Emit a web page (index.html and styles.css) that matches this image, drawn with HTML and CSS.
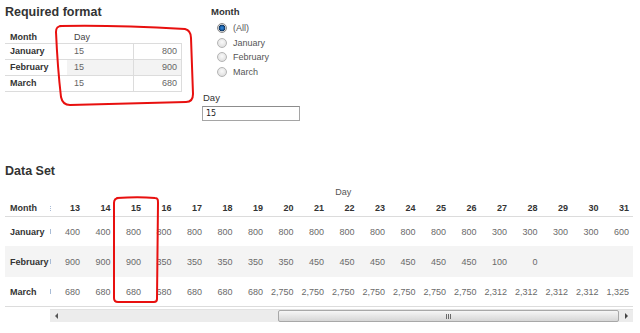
FILE: index.html
```html
<!DOCTYPE html>
<html>
<head>
<meta charset="utf-8">
<link rel="stylesheet" href="styles.css">
</head>
<body>
<div class="page">
  <div class="top">
    <section class="req">
      <h2 class="title">Required format</h2>
      <div class="rtable">
        <div class="rrow rhead"><span class="c-m">Month</span><span class="c-d">Day</span><span class="c-v"></span></div>
        <div class="rrow"><span class="c-m">January</span><span class="c-d">15</span><span class="c-v">800</span></div>
        <div class="rrow alt"><span class="c-m">February</span><span class="c-d">15</span><span class="c-v">900</span></div>
        <div class="rrow"><span class="c-m">March</span><span class="c-d">15</span><span class="c-v">680</span></div>
      </div>
    </section>
    <aside class="filters">
      <div class="flabel">Month</div>
      <ul class="radios">
        <li><span class="radio on"></span><span>(All)</span></li>
        <li><span class="radio"></span><span>January</span></li>
        <li><span class="radio"></span><span>February</span></li>
        <li><span class="radio"></span><span>March</span></li>
      </ul>
      <div class="dlabel">Day</div>
      <div class="dinput">15</div>
    </aside>
  </div>

  <h2 class="title ds">Data Set</h2>
  <div class="dtable">
    <div class="super">Day</div>
    <div class="drow dhead">
      <span class="mcell">Month<i class="tick dots"></i></span>
      <span>13</span><span>14</span><span>15</span><span>16</span><span>17</span><span>18</span><span>19</span><span>20</span><span>21</span><span>22</span><span>23</span><span>24</span><span>25</span><span>26</span><span>27</span><span>28</span><span>29</span><span>30</span><span>31</span>
    </div>
    <div class="drow r1">
      <span class="mcell">January<i class="tick"></i></span>
      <span>400</span><span>400</span><span>800</span><span>800</span><span>800</span><span>800</span><span>800</span><span>800</span><span>800</span><span>800</span><span>800</span><span>800</span><span>800</span><span>800</span><span>300</span><span>300</span><span>300</span><span>300</span><span>600</span>
    </div>
    <div class="drow r2">
      <span class="mcell">February<i class="tick"></i></span>
      <span>900</span><span>900</span><span>900</span><span>350</span><span>350</span><span>350</span><span>350</span><span>350</span><span>450</span><span>450</span><span>450</span><span>450</span><span>450</span><span>450</span><span>100</span><span>0</span><span></span><span></span><span></span>
    </div>
    <div class="drow r3">
      <span class="mcell">March<i class="tick"></i></span>
      <span>680</span><span>680</span><span>680</span><span>680</span><span>680</span><span>680</span><span>680</span><span>2,750</span><span>2,750</span><span>2,750</span><span>2,750</span><span>2,750</span><span>2,750</span><span>2,750</span><span>2,312</span><span>2,312</span><span>2,312</span><span>2,312</span><span>1,325</span>
    </div>
    <div class="hscroll">
      <span class="arrow left"></span>
      <span class="thumb"><span class="grip"><i></i><i></i><i></i></span></span>
      <span class="arrow right"></span>
    </div>
  </div>

  <svg class="marks" width="640" height="333" viewBox="0 0 640 333" aria-hidden="true">
    <path d="M60,26 C95,25 150,27 185,29 C189,30 191,33 191,38 L193,94 C193,99 191,102 186,102 L70,105 C65,105 62,102 61,97 C59,80 57,55 56,32 C56,28 57,26 62,26" />
    <path d="M117,198 C130,197 145,197 155,198 C158,198 158,200 158,203 L157,299 C157,301 156,302 154,302 L118,302 C115,302 114,300 114,298 L114,203 C114,200 115,198 119,198" />
  </svg>
</div>
</body>
</html>
```

FILE: styles.css
```css
* { box-sizing: border-box; }
html, body { margin: 0; padding: 0; background: #fff; }
body {
  font-family: "Liberation Sans", Arial, sans-serif;
  font-size: 9px;
  color: #333;
}
.page {
  position: relative;
  width: 640px;
  height: 333px;
  padding-left: 5px;
  overflow: hidden;
}
.top { display: flex; }
.req { width: 197px; }
.title {
  margin: 5px 0 0;
  font-size: 12.5px;
  line-height: 15px;
  font-weight: bold;
  color: #333;
}

/* required table */
.rtable { margin-top: 11px; width: 177px; }
.rrow {
  display: grid;
  grid-template-columns: 62px 66px 49px;
  height: 16px;
  line-height: 15px;
  border-bottom: 1px solid #dcdcdc;
}
.rrow.rhead { height: 13px; line-height: 12px; }
.rrow span { white-space: nowrap; }
.c-m { padding-left: 5px; font-weight: bold; color: #333; }
.c-d { padding-left: 7px; color: #666; }
.c-v { text-align: right; padding-right: 4px; color: #666; border-left: 1px solid #dcdcdc; border-right: 1px solid #dcdcdc; }
.rhead .c-d { color: #444; }
.rhead .c-v { border: none; }
.rrow.alt .c-d, .rrow.alt .c-v { background: #f3f3f3; }

/* filters */
.filters { width: 110px; }
.flabel {
  margin-top: 6px;
  padding-left: 9px;
  line-height: 12px;
  font-size: 9.5px;
  font-weight: bold;
  color: #333;
}
.radios { list-style: none; margin: 3px 0 0; padding: 0 0 0 15px; }
.radios li {
  display: flex;
  align-items: center;
  height: 14.5px;
  color: #555;
}
.radio {
  width: 10px;
  height: 10px;
  border-radius: 50%;
  border: 1px solid #b4b4b4;
  background: radial-gradient(circle at 50% 40%, #fafafa 0, #e2e2e2 70%, #d0d0d0 100%);
  margin-right: 6px;
  flex: none;
}
.radio.on {
  border-color: #8a8a8a;
  background: radial-gradient(circle at 50% 50%, #3b8fe0 0, #1a5fa8 2px, #0c2f55 3px, #d9d9d9 3.6px, #ececec 100%);
}
.dlabel {
  margin-top: 13px;
  padding-left: 1px;
  line-height: 12px;
  font-size: 9.5px;
  color: #333;
}
.dinput {
  margin-top: 2px;
  width: 98px;
  height: 15px;
  border: 1px solid #a5a5a5;
  border-top-color: #8c8c8c;
  padding-left: 3px;
  font-family: "DejaVu Sans", Verdana, sans-serif;
  font-size: 8px;
  line-height: 13px;
  color: #222;
}

/* data set */
.title.ds { margin-top: 43px; }
.dtable { width: 628px; }
.super {
  margin-top: 7px;
  padding-left: 48.5px;
  text-align: center;
  line-height: 12px;
  color: #555;
}
.drow {
  display: grid;
  grid-template-columns: 48.5px repeat(19, 30.5px);
  align-items: center;
}
.drow span {
  text-align: right;
  padding-right: 4px;
  color: #6a6a6a;
  white-space: nowrap;
}
.drow .mcell {
  display: flex;
  align-items: center;
  justify-content: space-between;
  text-align: left;
  padding: 0 3px 0 5px;
  font-weight: bold;
  color: #333;
}
.dhead {
  margin-top: 2px;
  height: 17px;
  border-bottom: 1px solid #dcdcdc;
}
.dhead span { font-weight: bold; color: #333; }
.r1 { height: 29px; }
.r2 { height: 31px; background: #f4f4f4; }
.r3 { height: 30px; border-bottom: 1px solid #dcdcdc; }
.tick {
  display: block;
  width: 1px;
  height: 5px;
  background: #a9bcd6;
}
.tick.dots {
  height: 5px;
  background: repeating-linear-gradient(to bottom, #a9bcd6 0 1px, transparent 1px 2px);
}

.hscroll {
  display: flex;
  align-items: center;
  margin: 2px 0 0 45px;
  width: 583px;
  height: 13px;
  background: #ececec;
  border-top: 1px solid #e2e2e2;
}
.arrow { display: flex; justify-content: center; align-items: center; }
.arrow.left { width: 13px; }
.arrow.left::before {
  content: "";
  border-right: 3px solid #555;
  border-top: 3px solid transparent;
  border-bottom: 3px solid transparent;
}
.arrow.right { flex: 1; }
.arrow.right::before {
  content: "";
  border-left: 3px solid #444;
  border-top: 3px solid transparent;
  border-bottom: 3px solid transparent;
}
.thumb {
  display: flex;
  justify-content: center;
  align-items: center;
  margin-left: 214.5px;
  width: 341.5px;
  height: 12px;
  border: 1px solid #a8a8a8;
  border-radius: 2px;
  background: linear-gradient(to bottom, #f6f6f6 0, #e6e6e6 50%, #d6d6d6 100%);
}
.grip { display: flex; gap: 1px; }
.grip i { display: block; width: 1px; height: 5px; background: #6a6a6a; }

.marks {
  position: absolute;
  left: 0;
  top: 0;
  pointer-events: none;
}
.marks path {
  fill: none;
  stroke: #e8100f;
  stroke-width: 2;
  stroke-linecap: round;
  stroke-linejoin: round;
}
```
